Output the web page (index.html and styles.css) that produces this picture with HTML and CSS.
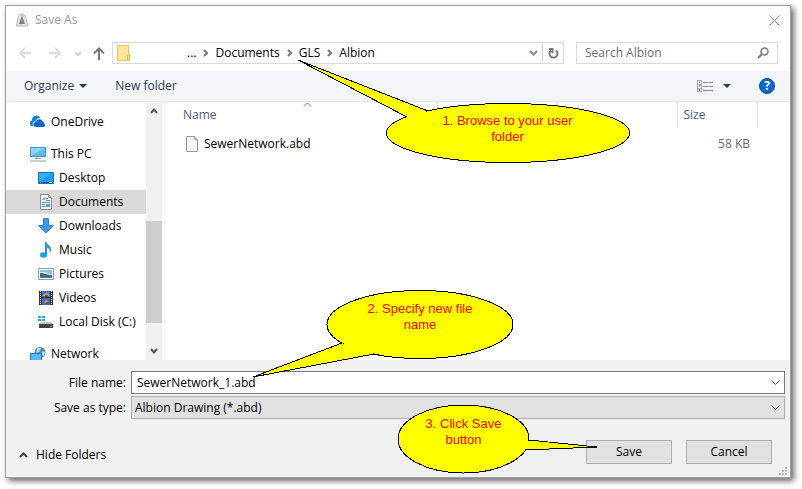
FILE: index.html
```html
<!DOCTYPE html>
<html lang="en">

<head>
  <meta charset="UTF-8" />
  <meta name="viewport" content="width=device-width, initial-scale=1" />
  <title>Save As</title>
  <link rel="stylesheet" href="styles.css">
</head>

<body>

  <form class="dialog" onsubmit="return false">

    <header class="titlebar">
      <svg class="app-icon" width="12" height="14" viewBox="0 0 12 14">
        <path d="M.5 13 2 4.500Q3 1 6 1t4 3.500L11.500 13z" fill="#e4e6ea" stroke="#b4b8c0" />
        <path d="M6 2.500 9 11H3z" fill="#777" />
        <path d="M6 2v9" stroke="#999" />
      </svg>
      <h1>Save As</h1>
      <button type="button" class="close" aria-label="Close">
        <svg width="11" height="11" viewBox="0 0 11 11"><path d="M.5.5l10 10M10.500.5l-10 10" stroke="#888" /></svg>
      </button>
    </header>

    <div class="nav">
      <div class="nav-buttons">
        <button type="button" aria-label="Back">
          <svg width="12" height="12" viewBox="0 0 12 12" fill="none" stroke="#dcdcdc" stroke-width="2"><path d="M12 6H1M6 1 1 6l5 5" /></svg>
        </button>
        <button type="button" aria-label="Forward">
          <svg width="12" height="12" viewBox="0 0 12 12" fill="none" stroke="#dcdcdc" stroke-width="2"><path d="M0 6h11M6 1l5 5-5 5" /></svg>
        </button>
        <button type="button" class="recent" aria-label="Recent locations">
          <svg width="6" height="5" viewBox="0 0 6 5" fill="none" stroke="#d0d0d0" stroke-width="2"><path d="M0 1l3 3 3-3" /></svg>
        </button>
        <button type="button" class="up" aria-label="Up">
          <svg width="12" height="13" viewBox="0 0 12 13" fill="none" stroke="#777" stroke-width="2"><path d="M6 13V2M1 6.500l5-5 5 5" /></svg>
        </button>
      </div>
      <div class="address">
        <svg class="folder" width="14" height="17" viewBox="0 0 14 17">
          <path d="M.5.5h11v15H.5z" fill="#ffe69a" stroke="#efc955" />
          <path d="M10.500 15.500v-5l2-1v6z" fill="#ffe17f" stroke="#e8bd3d" />
        </svg>
        <nav class="crumbs">
          <a href="#">...</a>
          <svg width="5" height="8" viewBox="0 0 5 8"><path d="M1 1l3 3-3 3" /></svg>
          <a href="#">Documents</a>
          <svg width="5" height="8" viewBox="0 0 5 8"><path d="M1 1l3 3-3 3" /></svg>
          <a href="#">GLS</a>
          <svg width="5" height="8" viewBox="0 0 5 8"><path d="M1 1l3 3-3 3" /></svg>
          <a href="#">Albion</a>
        </nav>
        <button type="button" class="history" aria-label="Previous locations">
          <svg width="9" height="6" viewBox="0 0 9 6" fill="none" stroke="#888" stroke-width="2"><path d="M1 1l3.500 3.500L8 1" /></svg>
        </button>
        <button type="button" class="refresh" aria-label="Refresh">
          <svg width="11" height="12" viewBox="0 0 11 12" fill="none" stroke="#777" stroke-width="2"><path d="M8 3.500A4 4 0 1 1 3 3.500M1 2h3.500V6" /></svg>
        </button>
      </div>
      <div class="search">
        <input type="search" placeholder="Search Albion" aria-label="Search Albion">
        <svg width="12" height="12" viewBox="0 0 12 12" fill="none" stroke="#777"><circle cx="7.500" cy="4.500" r="3.500" stroke-width="1.500" /><path d="M5 7 1 11" stroke-width="2" /></svg>
      </div>
    </div>

    <div class="toolbar">
      <button type="button">Organize
        <svg width="8" height="4" viewBox="0 0 8 4"><path d="M0 0h8L4 4z" fill="#1e395b" /></svg>
      </button>
      <button type="button">New folder</button>
      <button type="button" class="view" aria-label="Change your view">
        <svg width="17" height="12" viewBox="0 0 17 12" shape-rendering="crispEdges">
          <path d="M.5.5h4v11h-4zM.5 4h4M.5 8h4" fill="#fff" stroke="#aaa" />
          <path d="M2 2h1v1H2z" fill="#777" />
          <path d="M2 5h1v2H2z" fill="#38a0e8" />
          <path d="M2 9h1v2H2z" fill="#d04040" />
          <path d="M6 2.500h5M12 2.500h4M6 6.500h5M12 6.500h4M6 10.500h5M12 10.500h4" stroke="#888" />
        </svg>
        <svg width="8" height="4" viewBox="0 0 8 4"><path d="M0 0h8L4 4z" fill="#1e395b" /></svg>
      </button>
      <button type="button" class="help" aria-label="Help">?</button>
    </div>

    <main class="browser">
      <aside class="sidebar">
        <ul class="tree">
          <li class="root">
            <svg width="16" height="16" viewBox="0 0 16 16">
              <path d="M1 12a3 3 0 0 1 1-5.500A4.500 4.500 0 0 1 10.500 4 4 4 0 0 0 6 7c-3 0-4 3-2.500 5z" fill="#1683d8" />
              <path d="M6 13a2.500 2.500 0 0 1 0-5 3.500 3.500 0 0 1 6.500-1 3 3 0 0 1 1.500 2.500A2 2 0 0 1 14 13z" fill="#0a66c2" />
            </svg>
            <a href="#">OneDrive</a>
          </li>
          <li class="root">
            <svg width="16" height="16" viewBox="0 0 16 16">
              <path d="M.5 1.500h15v9H.5z" fill="#5bbcf2" stroke="#4a8fb5" />
              <path d="M1 10V2h14z" fill="#8bd4fa" />
              <path d="M5 12.500h6M0 15h16" stroke="#8aa0b4" />
            </svg>
            <a href="#">This PC</a>
          </li>
          <li>
            <svg width="16" height="16" viewBox="0 0 16 16">
              <path d="M.5 2.500h15v11H.5z" fill="#1b9cf2" stroke="#1672b4" />
              <path d="M1 12V3h13z" fill="#35adfa" />
              <path d="M1 12.500h14" stroke="#075792" /><path d="M2 12.500h1M11 12.500h3" stroke="#bde4ff" />
            </svg>
            <a href="#">Desktop</a>
          </li>
          <li class="selected">
            <svg width="16" height="16" viewBox="0 0 16 16">
              <path d="M2.500.5h8l3 3v12h-11z" fill="#fff" stroke="#888" />
              <path d="M10.500.5v3h3" fill="#ddd" stroke="#888" />
              <path d="M4 6.500l2-3 1 3M8 4.500h2M8 6.500h4M4 8.500h8M4 10.500h3M4 12.500h3" fill="none" stroke="#4c98bd" />
              <path d="M8 10h4v3H8z" fill="#49a1d8" />
            </svg>
            <a href="#">Documents</a>
          </li>
          <li>
            <svg width="16" height="16" viewBox="0 0 16 16"><path d="M5.500.5h5v7h5L8 15 .5 7.500h5z" fill="#3a9bea" stroke="#2e83cf" /></svg>
            <a href="#">Downloads</a>
          </li>
          <li>
            <svg width="16" height="16" viewBox="0 0 16 16">
              <path d="M7 0h1.500c.5 3 5 3.500 4.500 8-.2 1-.7 2-1.500 2.500.7-3-1-4.500-2.500-5V13H7z" fill="#1e96e8" />
              <ellipse cx="5.500" cy="13" rx="3.500" ry="2.800" fill="#12a0f8" />
            </svg>
            <a href="#">Music</a>
          </li>
          <li>
            <svg width="16" height="16" viewBox="0 0 16 16">
              <path d="M.5 2.500h15v11H.5z" fill="#fff" stroke="#999" />
              <path d="M2 4h12v8H2z" fill="#86c3e8" />
              <path d="M2 6h5l7 3v1H2z" fill="#d9edf0" />
              <path d="M2 7c5 0 6 2 12 2v3H2z" fill="#3f735f" />
              <path d="M2 10.500h12V12H2z" fill="#3b7fa3" />
            </svg>
            <a href="#">Pictures</a>
          </li>
          <li>
            <svg width="16" height="16" viewBox="0 0 16 16">
              <path d="M1 1h14v14H1z" fill="#333" />
              <path d="M4 1h8v6H4zM4 8h8v7H4z" fill="#3272d0" />
              <path d="M5 5l3-2 3 1v2H5zM6 12l2-2 3 2-2 2z" fill="#e7a52d" />
              <path d="M7 5h3v2H7zM8 12h3v2H8z" fill="#9d3425" />
              <path d="M2.500 1v14M13.500 1v14" stroke="#eee" stroke-dasharray="1 1" />
            </svg>
            <a href="#">Videos</a>
          </li>
          <li>
            <svg width="16" height="16" viewBox="0 0 16 16">
              <path d="M0 2h3v2H0zM4 2h3v2H4zM0 5h3v2H0zM4 5h3v2H4z" fill="#16b3e8" />
              <path d="M3 8h10l2 3H1z" fill="#c4c4c4" />
              <path d="M1 10h14v4H1z" fill="#444" />
              <path d="M12 12h2v1h-2z" fill="#49e05e" />
            </svg>
            <a href="#">Local Disk (C:)</a>
          </li>
          <li class="root">
            <svg width="16" height="16" viewBox="0 0 16 16">
              <circle cx="10" cy="6.500" r="5.500" fill="#4b8bb0" />
              <path d="M7 3c2-2 4-1 4 0L9 6 6 7zM12 5l3 1-1 4-2-1z" fill="#b9dce9" />
              <path d="M.5 7.500h11v7H.5z" fill="#54bcf5" stroke="#2878aa" />
            </svg>
            <a href="#">Network</a>
          </li>
        </ul>
        <div class="scrollbar">
          <svg width="8" height="6" viewBox="0 0 8 6"><path d="M1 5l3-3.500L7 5" /></svg>
          <div class="track"><div class="thumb"></div></div>
          <svg width="8" height="6" viewBox="0 0 8 6"><path d="M1 1l3 3.500L7 1" /></svg>
        </div>
      </aside>

      <section class="files">
        <table>
          <colgroup>
            <col>
            <col class="col-detail">
            <col class="col-detail">
            <col class="col-size">
            <col class="col-rest">
          </colgroup>
          <thead>
            <tr>
              <th class="sorted">Name
                <svg width="9" height="5" viewBox="0 0 9 5"><path d="M1 4.500l3.500-3.500L8 4.500" fill="none" stroke="#777" /></svg>
              </th>
              <th></th>
              <th></th>
              <th class="size-head">Size</th>
              <th></th>
            </tr>
          </thead>
          <tbody>
            <tr>
              <td>
                <div class="file">
                  <svg width="12" height="16" viewBox="0 0 12 16">
                    <path d="M.5.5h8l3 3v12H.5z" fill="#f7f8f8" stroke="#999" />
                    <path d="M8.500.5v3h3" fill="#fff" stroke="#999" />
                  </svg>
                  SewerNetwork.abd
                </div>
              </td>
              <td></td>
              <td></td>
              <td class="size">58 KB</td>
              <td></td>
            </tr>
          </tbody>
        </table>
      </section>
    </main>

    <div class="bottom">
      <div class="fields">
        <label for="fileName">File name:</label>
        <div class="combo">
          <input type="text" id="fileName" value="SewerNetwork_1.abd">
          <svg width="9" height="6" viewBox="0 0 9 6"><path d="M.5.5l4 4 4-4" /></svg>
        </div>
        <label for="fileType">Save as type:</label>
        <div class="combo type">
          <select id="fileType">
            <option>Albion Drawing (*.abd)</option>
          </select>
          <svg width="9" height="6" viewBox="0 0 9 6"><path d="M.5.5l4 4 4-4" /></svg>
        </div>
      </div>

      <footer class="actions">
        <button type="button" class="hide">
          <svg width="9" height="6" viewBox="0 0 9 6"><path d="M1 5l3.500-3.500L8 5" fill="none" stroke="#444" stroke-width="2" /></svg>
          Hide Folders
        </button>
        <button type="submit" class="push">Save</button>
        <button type="button" class="push">Cancel</button>
      </footer>
      <svg class="grip" width="8" height="8" viewBox="0 0 8 8"><path d="M6 0h2v2H6zM3 3h2v2H3zM6 3h2v2H6zM0 6h2v2H0zM3 6h2v2H3zM6 6h2v2H6z" fill="#bfbfbf" /></svg>
    </div>

    <!-- help balloons, drawn over the dialog -->
    <div class="balloon browse">
      <svg width="334" height="106" viewBox="0 0 334 106">
        <ellipse cx="211" cy="74" rx="121.500" ry="29.500" />
        <path d="M110 58 1 1l130 51" />
      </svg>
      <p>1. Browse to your user<br>folder</p>
    </div>
    <div class="balloon specify">
      <svg width="263" height="90" viewBox="0 0 263 90">
        <ellipse cx="168" cy="35.500" rx="93" ry="34" />
        <path d="M90 54 1 88l121-23" />
      </svg>
      <p>2. Specify new file<br>name</p>
    </div>
    <div class="balloon click">
      <svg width="202" height="70" viewBox="0 0 202 70">
        <ellipse cx="66.500" cy="35" rx="65.500" ry="34" />
        <path d="M132 36l68 7-72 3" />
      </svg>
      <p>3. Click Save<br>button</p>
    </div>

  </form>

</body>

</html>
```

FILE: styles.css
```css
* {
  box-sizing: border-box;
}

body {
  margin: 0;
  padding: 5px 11px 11px 5px;
  min-height: 100vh;
  display: flex;
  background: #ffffff;
  color: #000000;
  font-family: "Open Sans", "Segoe UI", sans-serif;
  font-size: 12px;
  line-height: 16px;
}

button,
input,
select {
  font: inherit;
  color: inherit;
}

button {
  display: flex;
  align-items: center;
  justify-content: center;
  padding: 0;
  border: none;
  background: none;
}

a {
  color: inherit;
  text-decoration: none;
}

svg {
  flex: none;
  display: block;
}

.dialog {
  position: relative;
  flex: 1;
  min-width: 0;
  display: flex;
  flex-direction: column;
  border: 1px solid #a0a0a0;
  background: #ffffff;
  box-shadow: 3px 3px 6px rgba(0, 0, 0, 0.6);
}

/* title */

.titlebar {
  display: flex;
  align-items: center;
  height: 28px;
  padding: 0 10px;
}

.titlebar h1 {
  flex: 1;
  margin: 0 0 0 7px;
  font-size: 12px;
  font-weight: normal;
  color: #999999;
}

/* address and search */

.nav {
  display: flex;
  height: 37px;
  padding: 8px 12px 7px 0;
}

.nav-buttons {
  display: flex;
  align-items: center;
  width: 106px;
  padding-left: 13px;
  gap: 18px;
}

.nav-buttons .recent {
  margin-left: -4px;
}

.nav-buttons .up {
  margin-left: -6px;
}

.address {
  flex: 1;
  display: flex;
  align-items: center;
  border: 1px solid #d9d9d9;
}

.folder {
  margin-left: 4px;
}

.crumbs {
  flex: 1;
  display: flex;
  align-items: center;
  gap: 7px;
  padding-left: 56px;
}

.crumbs svg {
  fill: none;
  stroke: #777777;
  stroke-width: 2;
}

.refresh {
  width: 21px;
  height: 100%;
  margin-left: 4px;
  border-left: 1px solid #d9d9d9;
}

.search {
  display: flex;
  align-items: center;
  width: 202px;
  margin-left: 12px;
  padding: 0 8px;
  border: 1px solid #d9d9d9;
}

.search input {
  flex: 1;
  min-width: 0;
  padding: 0;
  border: none;
  outline: none;
  background: none;
}

.search input::placeholder {
  color: #6d6d6d;
}

/* toolbar */

.toolbar {
  display: flex;
  align-items: center;
  gap: 28px;
  height: 31px;
  padding: 0 15px 0 18px;
  border-bottom: 1px solid #e5e7ea;
  background: #f4f5f8;
  color: #1e395b;
}

.toolbar button {
  gap: 5px;
}

.toolbar .view {
  gap: 9px;
  margin-left: auto;
}

.toolbar .help {
  width: 16px;
  height: 16px;
  border: 1px solid #0b4c96;
  border-radius: 50%;
  background: #0a68cc;
  color: #ffffff;
  font-weight: bold;
}

/* folders and files */

.browser {
  flex: 1;
  min-height: 0;
  display: flex;
}

.sidebar {
  display: flex;
  width: 159px;
  border-right: 1px solid #f0f0f0;
}

.tree {
  flex: 1;
  height: 258px;
  margin: 0;
  padding: 8px 0 0;
  overflow: hidden;
  line-height: 12px;
  list-style: none;
}

.tree li {
  display: flex;
  align-items: center;
  gap: 5px;
  height: 24px;
  padding-left: 32px;
  white-space: nowrap;
}

.tree .root {
  padding-left: 24px;
}

.tree .root + .root,
.tree li:not(.root) + .root {
  margin-top: 8px;
}

.tree .selected {
  background: #d9d9d9;
}

.scrollbar {
  display: flex;
  flex-direction: column;
  align-items: center;
  width: 16px;
  margin-right: 2px;
  padding: 6px 0;
  background: #f0f0f0;
}

.scrollbar svg {
  fill: none;
  stroke: #555555;
  stroke-width: 2;
}

.track {
  flex: 1;
  display: flex;
  flex-direction: column;
  justify-content: flex-end;
  width: 100%;
  padding-bottom: 25px;
}

.thumb {
  height: 102px;
  background: #cdcdcd;
}

.files {
  flex: 1;
}

.files table {
  width: 100%;
  border-collapse: collapse;
  table-layout: fixed;
}

.col-detail {
  width: 120px;
}

.col-size {
  width: 80px;
}

.col-rest {
  width: 33px;
}

.files th {
  height: 25px;
  padding: 0 6px;
  border-right: 1px solid #e5e5e5;
  color: #4c607a;
  font-weight: normal;
  text-align: left;
}

.files th:last-child {
  border-right: none;
}

.files .sorted {
  position: relative;
  padding-left: 18px;
}

.sorted svg {
  position: absolute;
  top: 0;
  left: 51%;
}

.files td {
  height: 34px;
  padding: 0 7px;
}

.file {
  display: flex;
  align-items: center;
  gap: 6px;
  padding-left: 14px;
}

.files .size {
  color: #6d6d6d;
  text-align: right;
}

/* file name and buttons */

.bottom {
  position: relative;
  padding: 11px 5px 13px 0;
  background: #f0f0f0;
}

.fields {
  display: grid;
  grid-template-columns: 120px 1fr;
  align-items: center;
  gap: 2px 5px;
}

.fields label {
  text-align: right;
}

.combo {
  display: flex;
  align-items: center;
  height: 23px;
  padding-right: 4px;
  border: 1px solid #7a7a7a;
  background: #ffffff;
}

.combo.type {
  border-color: #adadad;
  background: #e1e1e1;
}

.combo input,
.combo select {
  flex: 1;
  min-width: 0;
  height: 100%;
  padding: 0 5px;
  border: none;
  outline: none;
  background: none;
  appearance: none;
}

.combo select {
  padding: 0 3px;
}

.combo svg {
  fill: none;
  stroke: #555555;
}

.actions {
  display: flex;
  align-items: center;
  gap: 14px;
  margin-top: 21px;
  padding: 0 13px;
}

.hide {
  gap: 8px;
  margin-right: auto;
  padding-top: 6px;
}

.push {
  width: 86px;
  height: 24px;
  border: 1px solid #adadad;
  background: #e1e1e1;
}

.grip {
  position: absolute;
  right: 3px;
  bottom: 2px;
}

/* balloons */

.balloon {
  position: absolute;
  color: #ff0000;
  font-family: "Liberation Sans", Arial, sans-serif;
  font-size: 13px;
  text-align: center;
}

.balloon svg {
  fill: #ffff00;
  stroke: #000000;
  shape-rendering: crispEdges;
}

.balloon p {
  position: absolute;
  margin: 0;
  white-space: nowrap;
}

.browse {
  top: 53px;
  left: 291px;
}

.browse p {
  top: 54px;
  left: 89px;
  width: 243px;
}

.specify {
  top: 283px;
  left: 246px;
}

.specify p {
  top: 12px;
  left: 75px;
  width: 186px;
}

.click {
  top: 398px;
  left: 391px;
}

.click p {
  top: 12px;
  left: 1px;
  width: 131px;
}
```
